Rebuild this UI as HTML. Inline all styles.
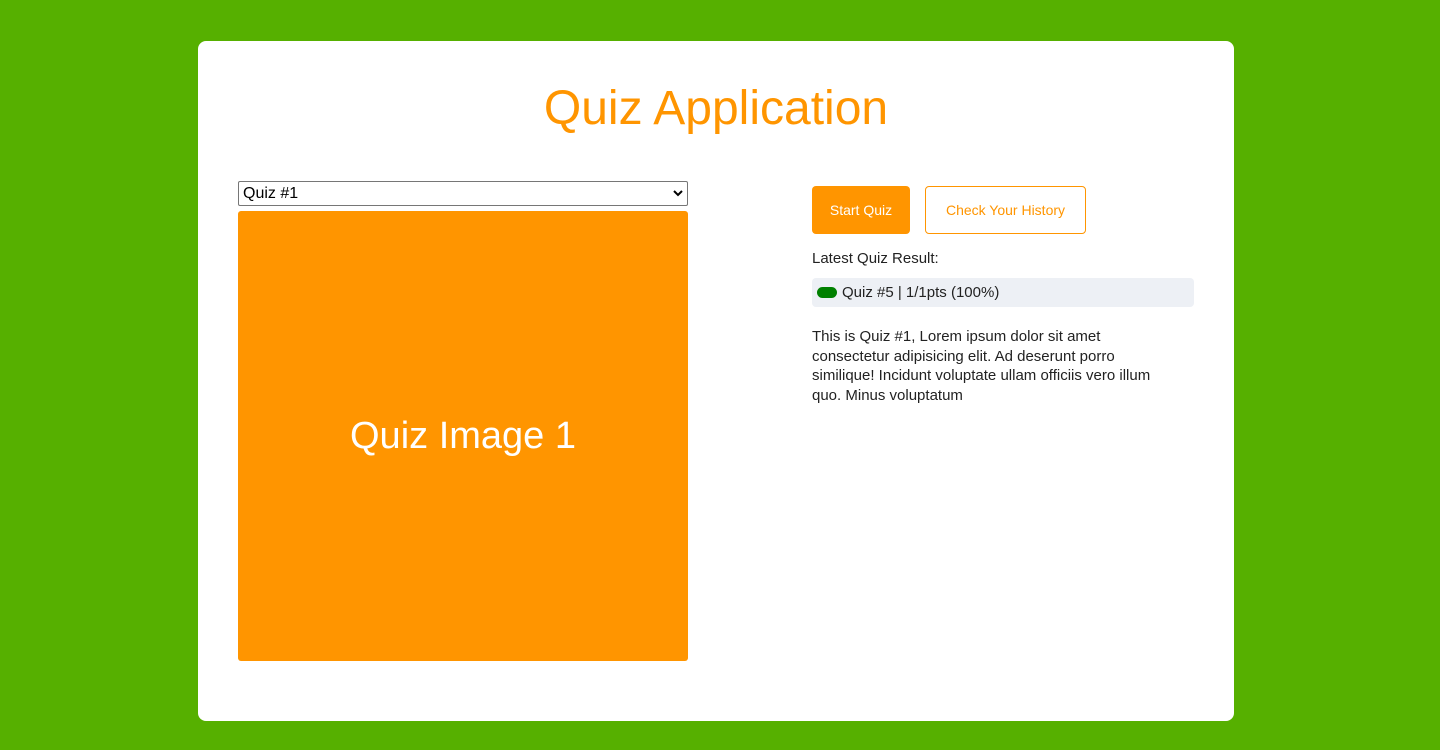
<!DOCTYPE html>
<html><head><style>
*{box-sizing:border-box;margin:0;padding:0}
body{width:1440px;height:750px;background:#56b000;font-family:"Liberation Sans","DejaVu Sans",sans-serif;position:relative;overflow:hidden}
.card{position:absolute;left:198px;top:41px;width:1036px;height:680px;background:#fff;border-radius:8px}
h1{position:absolute;left:0;width:100%;top:40px;text-align:center;font-weight:normal;font-size:48px;color:#ff9500}
.sel{position:absolute;left:40px;top:140px;width:450px;height:25px;border:1px solid #767676;border-radius:2px;font-size:16px;padding:2px 4px;color:#000;line-height:19px}
.sel svg{position:absolute;right:4px;top:7px}
.img{position:absolute;left:40px;top:170px;width:450px;height:450px;background:#ff9500;border-radius:3px;color:#fff;font-size:38px;display:flex;align-items:center;justify-content:center}
.b1{position:absolute;left:614px;top:145px;width:98px;height:48px;background:#ff9500;color:#fff;border-radius:4px;font-size:14px;display:flex;align-items:center;justify-content:center}
.b2{position:absolute;left:727px;top:145px;width:161px;height:48px;border:1px solid #ff9500;color:#ff9500;border-radius:4px;font-size:14px;display:flex;align-items:center;justify-content:center}
.lbl{position:absolute;left:614px;top:209px;font-size:15px;color:#222}
.res{position:absolute;left:614px;top:237px;width:382px;height:29px;background:#edf0f5;border-radius:4px;font-size:15px;color:#222;line-height:29px;padding-left:30px}
.res i{position:absolute;left:5px;top:9px;width:20px;height:11px;border-radius:6px;background:#008000}
.desc{position:absolute;left:614px;top:286px;width:400px;font-size:15px;line-height:19.5px;color:#222;white-space:nowrap}
</style></head><body>
<div class="card">
<h1>Quiz Application</h1>
<div class="sel">Quiz #1<svg width="10" height="8" viewBox="0 0 10 8"><path d="M1 2l4 4 4-4" stroke="#000" stroke-width="2" fill="none"/></svg></div>
<div class="img">Quiz Image 1</div>
<div class="b1">Start Quiz</div>
<div class="b2">Check Your History</div>
<div class="lbl">Latest Quiz Result:</div>
<div class="res"><i></i>Quiz #5 | 1/1pts (100%)</div>
<div class="desc">This is Quiz #1, Lorem ipsum dolor sit amet<br>consectetur adipisicing elit. Ad deserunt porro<br>similique! Incidunt voluptate ullam officiis vero illum<br>quo. Minus voluptatum</div>
</div>
</body></html>
